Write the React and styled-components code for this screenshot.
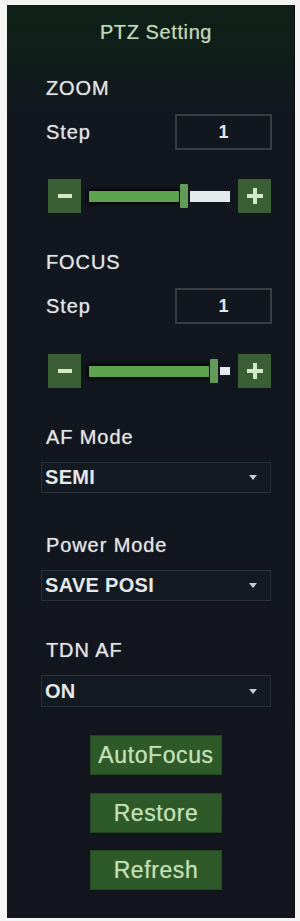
import React from "react";
import styled, { createGlobalStyle } from "styled-components";

const GlobalStyle = createGlobalStyle`
  body {
    margin: 0;
    background: #f3f4f3;
    font-family: "Liberation Sans", Arial, sans-serif;
  }
`;

const sliders = [
  { name: "ZOOM", step: 1, value: 0.69 },
  { name: "FOCUS", step: 1, value: 0.92 },
];

const selects = [
  { name: "AF Mode", value: "SEMI" },
  { name: "Power Mode", value: "SAVE POSI" },
  { name: "TDN AF", value: "ON" },
];

function App() {
  return (
    <>
      <GlobalStyle />
      <Panel>
        <Title>PTZ Setting</Title>

        {sliders.map((s, i) => (
          <React.Fragment key={s.name}>
            <Label $top={i === 0 ? 17 : 37}>{s.name}</Label>
            <StepRow>
              <Label>Step</Label>
              <StepInput>{s.step}</StepInput>
            </StepRow>
            <SliderRow $top={i === 0 ? 29 : 30}>
              <SquareButton>
                <Minus />
              </SquareButton>
              <Track>
                <Fill style={{ flexGrow: s.value }} />
                <Thumb />
                <Rest style={{ flexGrow: 1 - s.value }} $small={s.value > 0.9} />
              </Track>
              <SquareButton>
                <Plus />
              </SquareButton>
            </SliderRow>
          </React.Fragment>
        ))}

        {selects.map((s, i) => (
          <React.Fragment key={s.name}>
            <Label $top={i === 1 ? 40 : 37}>{s.name}</Label>
            <Select $tall={i === 2}>
              <span>{s.value}</span>
              <Arrow />
            </Select>
          </React.Fragment>
        ))}

        <ActionButton $top={28}>AutoFocus</ActionButton>
        <ActionButton $top={18}>Restore</ActionButton>
        <ActionButton $top={17}>Refresh</ActionButton>
      </Panel>
    </>
  );
}

const Panel = styled.div`
  margin: 5px 0 0 7px;
  width: 288px;
  height: 913px;
  box-sizing: border-box;
  padding: 0 23px 0 34px;
  display: flex;
  flex-direction: column;
  background: linear-gradient(
    to bottom,
    #0e2017 0px,
    #0f1e19 45px,
    #12171f 110px,
    #12151e 100%
  );
  border-right: 1px solid #0a0c10;
`;

const Title = styled.div`
  height: 54px;
  line-height: 54px;
  text-align: center;
  font-size: 20px;
  color: #c0d8b8;
  letter-spacing: 0.6px;
  text-shadow: 0 0 1px rgba(192, 216, 184, 0.6);
`;

const Label = styled.div`
  margin-top: ${(p) => p.$top || 0}px;
  height: 24px;
  line-height: 24px;
  padding-left: 5px;
  font-size: 20px;
  color: #e2e4e6;
  letter-spacing: 0.9px;
  text-shadow: 0 0 1px rgba(226, 228, 230, 0.7);
`;

const StepRow = styled.div`
  margin-top: 14px;
  height: 36px;
  display: flex;
  align-items: center;
  justify-content: space-between;
`;

const StepInput = styled.div`
  width: 97px;
  height: 36px;
  box-sizing: border-box;
  border: 2px solid #383d43;
  margin-right: -1px;
  display: flex;
  align-items: center;
  justify-content: center;
  font-size: 18px;
  font-weight: bold;
  color: #e4e6e8;
`;

const SliderRow = styled.div`
  margin-top: ${(p) => p.$top}px;
  height: 34px;
  padding-left: 7px;
  display: flex;
  align-items: center;
  gap: 8px;
`;

const SquareButton = styled.div`
  width: 33px;
  height: 34px;
  background: #3a5f34;
  display: flex;
  align-items: center;
  justify-content: center;
`;

const Minus = styled.span`
  width: 14px;
  height: 4px;
  background: #d2e8c8;
`;

const Plus = styled.span`
  position: relative;
  width: 16px;
  height: 4px;
  background: #d2e8c8;

  &::after {
    content: "";
    position: absolute;
    left: 6px;
    top: -6px;
    width: 4px;
    height: 16px;
    background: #d2e8c8;
  }
`;

const Track = styled.div`
  flex: 1;
  height: 24px;
  display: flex;
  align-items: center;
`;

const Fill = styled.div`
  flex-basis: 0;
  height: 11px;
  background: #5da34d;
  box-shadow: 0 0 3px 2px rgba(0, 0, 0, 0.85);
`;

const Thumb = styled.div`
  width: 8px;
  height: 24px;
  margin: 0 2px 0 1px;
  background: #649b59;
  border-radius: 1px;
`;

const Rest = styled.div`
  flex-basis: 0;
  height: ${(p) => (p.$small ? 8 : 11)}px;
  background: #e6e9ee;
`;

const Select = styled.div`
  margin-top: 13px;
  height: ${(p) => (p.$tall ? 32 : 31)}px;
  box-sizing: border-box;
  border: 1px solid #27323a;
  background: #141a21;
  padding: 0 13px 0 3px;
  display: flex;
  align-items: center;
  justify-content: space-between;
  font-size: 20px;
  font-weight: bold;
  color: #e6e8ea;
  letter-spacing: 0.3px;
`;

const Arrow = styled.span`
  width: 0;
  height: 0;
  border-left: 4px solid transparent;
  border-right: 4px solid transparent;
  border-top: 5px solid #c9ccd0;
`;

const ActionButton = styled.div`
  margin-top: ${(p) => p.$top}px;
  align-self: center;
  width: 132px;
  height: 40px;
  box-sizing: border-box;
  border: 1px solid #23461f;
  background: #2e5a29;
  display: flex;
  align-items: center;
  justify-content: center;
  font-size: 23px;
  color: #c3e0b7;
  letter-spacing: 0.6px;
  text-shadow: 0 0 1px rgba(195, 224, 183, 0.6);
`;

export default App;
